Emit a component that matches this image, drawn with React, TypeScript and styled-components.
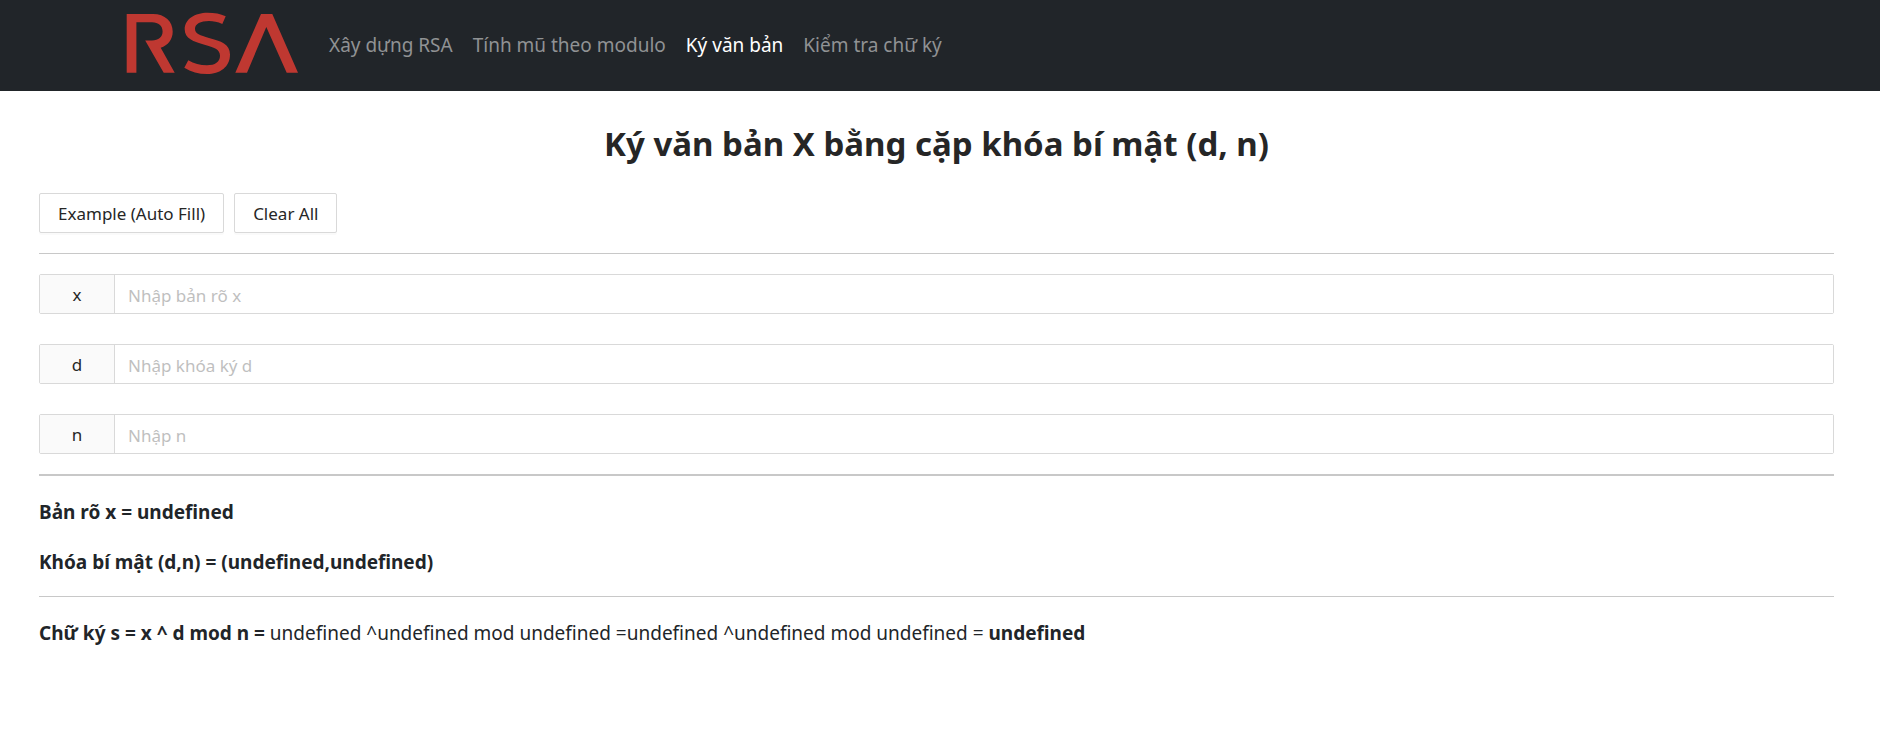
import React, { useState } from "react";
import styled, { createGlobalStyle } from "styled-components";

const GlobalStyle = createGlobalStyle`
  *, *::before, *::after { box-sizing: border-box; }
  body {
    margin: 0;
    background: #ffffff;
    color: #212529;
    font-family: "Segoe UI", "Noto Sans", "Open Sans", sans-serif;
    font-size: 19px;
    line-height: 28px;
  }
`;

const Navbar = styled.header`
  display: flex;
  align-items: center;
  min-height: 91px;
  padding: 0 126px;
  background: #212529;
`;

const Brand = styled.a`
  display: block;
  width: 173px;
  height: 67px;
  margin-right: 20px;
`;

const Logo = styled.svg`
  display: block;
  width: 100%;
  height: 100%;
`;

const NavList = styled.nav`
  display: flex;
  flex-wrap: wrap;
`;

const NavLink = styled.a<{ $active?: boolean }>`
  padding: 8px 10px 10px;
  font-size: 19px;
  white-space: nowrap;
  text-decoration: none;
  color: ${({ $active }) => ($active ? "#ffffff" : "#909294")};
  &:hover { color: #ffffff; }
`;

const Page = styled.main`
  padding: 30px 46px 30px 39px;
`;

const Title = styled.h1`
  margin: 0 0 26px;
  font-size: 33px;
  line-height: 46px;
  font-weight: 700;
  text-align: center;
  color: #262626;
`;

const ButtonRow = styled.div`
  display: flex;
  flex-wrap: wrap;
  gap: 10px;
`;

const Button = styled.button`
  height: 40px;
  padding: 0 18px;
  border: 1px solid #d9d9d9;
  border-radius: 2px;
  background: #ffffff;
  box-shadow: 0 2px 0 rgba(0, 0, 0, 0.02);
  color: #262626;
  font-family: inherit;
  font-size: 17px;
  cursor: pointer;
`;

const Divider = styled.hr<{ $weight?: number }>`
  height: ${({ $weight = 1 }) => $weight}px;
  margin: 20px 0;
  border: 0;
  background: #c8c8c8;
`;

const Fields = styled.div`
  display: flex;
  flex-direction: column;
  gap: 30px;
`;

const Field = styled.div`
  display: flex;
  height: 40px;
  border: 1px solid #d9d9d9;
  border-radius: 2px;
`;

const Addon = styled.label`
  display: flex;
  align-items: center;
  justify-content: center;
  width: 75px;
  padding-top: 2px;
  border-right: 1px solid #d9d9d9;
  background: #fafafa;
  color: #262626;
  font-size: 17px;
`;

const Input = styled.input`
  flex: 1;
  min-width: 0;
  padding: 2px 13px 0;
  border: 0;
  outline: 0;
  background: #ffffff;
  color: #262626;
  font-family: inherit;
  font-size: 17px;
  &::placeholder { color: #bfbfbf; opacity: 1; }
`;

const Results = styled.section`
  display: flex;
  flex-direction: column;
  gap: 20px;
`;

const Result = styled.p`
  margin: 0;
  padding-top: 2px;
`;

type Key = "x" | "d" | "n";

const fields: { key: Key; placeholder: string; example: string }[] = [
  { key: "x", placeholder: "Nhập bản rõ x", example: "65" },
  { key: "d", placeholder: "Nhập khóa ký d", example: "2753" },
  { key: "n", placeholder: "Nhập n", example: "3233" },
];

const links = ["Xây dựng RSA", "Tính mũ theo modulo", "Ký văn bản", "Kiểm tra chữ ký"];

function powMod(x: string, d: string, n: string): string {
  try {
    const mod = BigInt(n);
    let base = BigInt(x) % mod;
    let exp = BigInt(d);
    let out = 1n;
    while (exp > 0n) {
      if (exp & 1n) out = (out * base) % mod;
      base = (base * base) % mod;
      exp >>= 1n;
    }
    return String(out);
  } catch {
    return "undefined";
  }
}

export default function App() {
  const [values, setValues] = useState<Partial<Record<Key, string>>>({});
  const x = values.x || "undefined";
  const d = values.d || "undefined";
  const n = values.n || "undefined";
  const signature = powMod(x, d, n);

  const fill = () =>
    setValues(Object.fromEntries(fields.map((f) => [f.key, f.example])));

  return (
    <>
      <GlobalStyle />
      <Navbar>
        <Brand href="#" aria-label="RSA">
          <Logo viewBox="0 -2 173 67" fill="#bf3831">
            <path d="M.7 0H27C39 0 46.700 7.500 46.700 17.500C46.700 25.500 42 31.500 34.700 33.700L48.700 58.700H37.700L19.200 26.500H26C32.500 26.500 36.600 23 36.600 17.500C36.600 11.800 32.500 8.300 26 8.300H10.400V58.700H.7Z" />
            <path d="M99.700 2.300L96.300 10C91.500 7.800 87.500 7 83 7C74.500 7 69 9.800 69 14.800C69 19.800 74 21.300 83 24C95 27.200 104 30 104 40.500C104 53 94 60 81 60C72.500 60 65 58 58.300 53.700L62.300 46.300C68 49.700 74 51.300 81 51.300C89 51.300 94 48 94 41.800C94 35.200 88 33.300 78.500 30.700C67.500 27.800 58.700 24.500 58.700 15.300C58.700 5 69 -1.300 81.500 -1.300C88.500 -1.300 94.500 -0.200 99.700 2.300Z" />
            <path d="M135 0H146.300L172 58.700H160.700L140.300 13L121 58.700H109.300Z" />
          </Logo>
        </Brand>
        <NavList>
          {links.map((label) => (
            <NavLink key={label} href="#" $active={label === "Ký văn bản"}>
              {label}
            </NavLink>
          ))}
        </NavList>
      </Navbar>
      <Page>
        <Title>Ký văn bản X bằng cặp khóa bí mật (d, n)</Title>
        <ButtonRow>
          <Button type="button" onClick={fill}>Example (Auto Fill)</Button>
          <Button type="button" onClick={() => setValues({})}>Clear All</Button>
        </ButtonRow>
        <Divider />
        <Fields>
          {fields.map(({ key, placeholder }) => (
            <Field key={key}>
              <Addon htmlFor={key}>{key}</Addon>
              <Input
                id={key}
                placeholder={placeholder}
                value={values[key] ?? ""}
                onChange={(e) => setValues({ ...values, [key]: e.target.value })}
              />
            </Field>
          ))}
        </Fields>
        <Divider $weight={2} />
        <Results>
          <Result><b>Bản rõ x = {x}</b></Result>
          <Result><b>Khóa bí mật (d,n) = ({d},{n})</b></Result>
        </Results>
        <Divider />
        <Result>
          <b>Chữ ký s = x ^ d mod n = </b>
          {x} ^{d} mod {n} ={x} ^{d} mod {n} = <b>{signature}</b>
        </Result>
      </Page>
    </>
  );
}
